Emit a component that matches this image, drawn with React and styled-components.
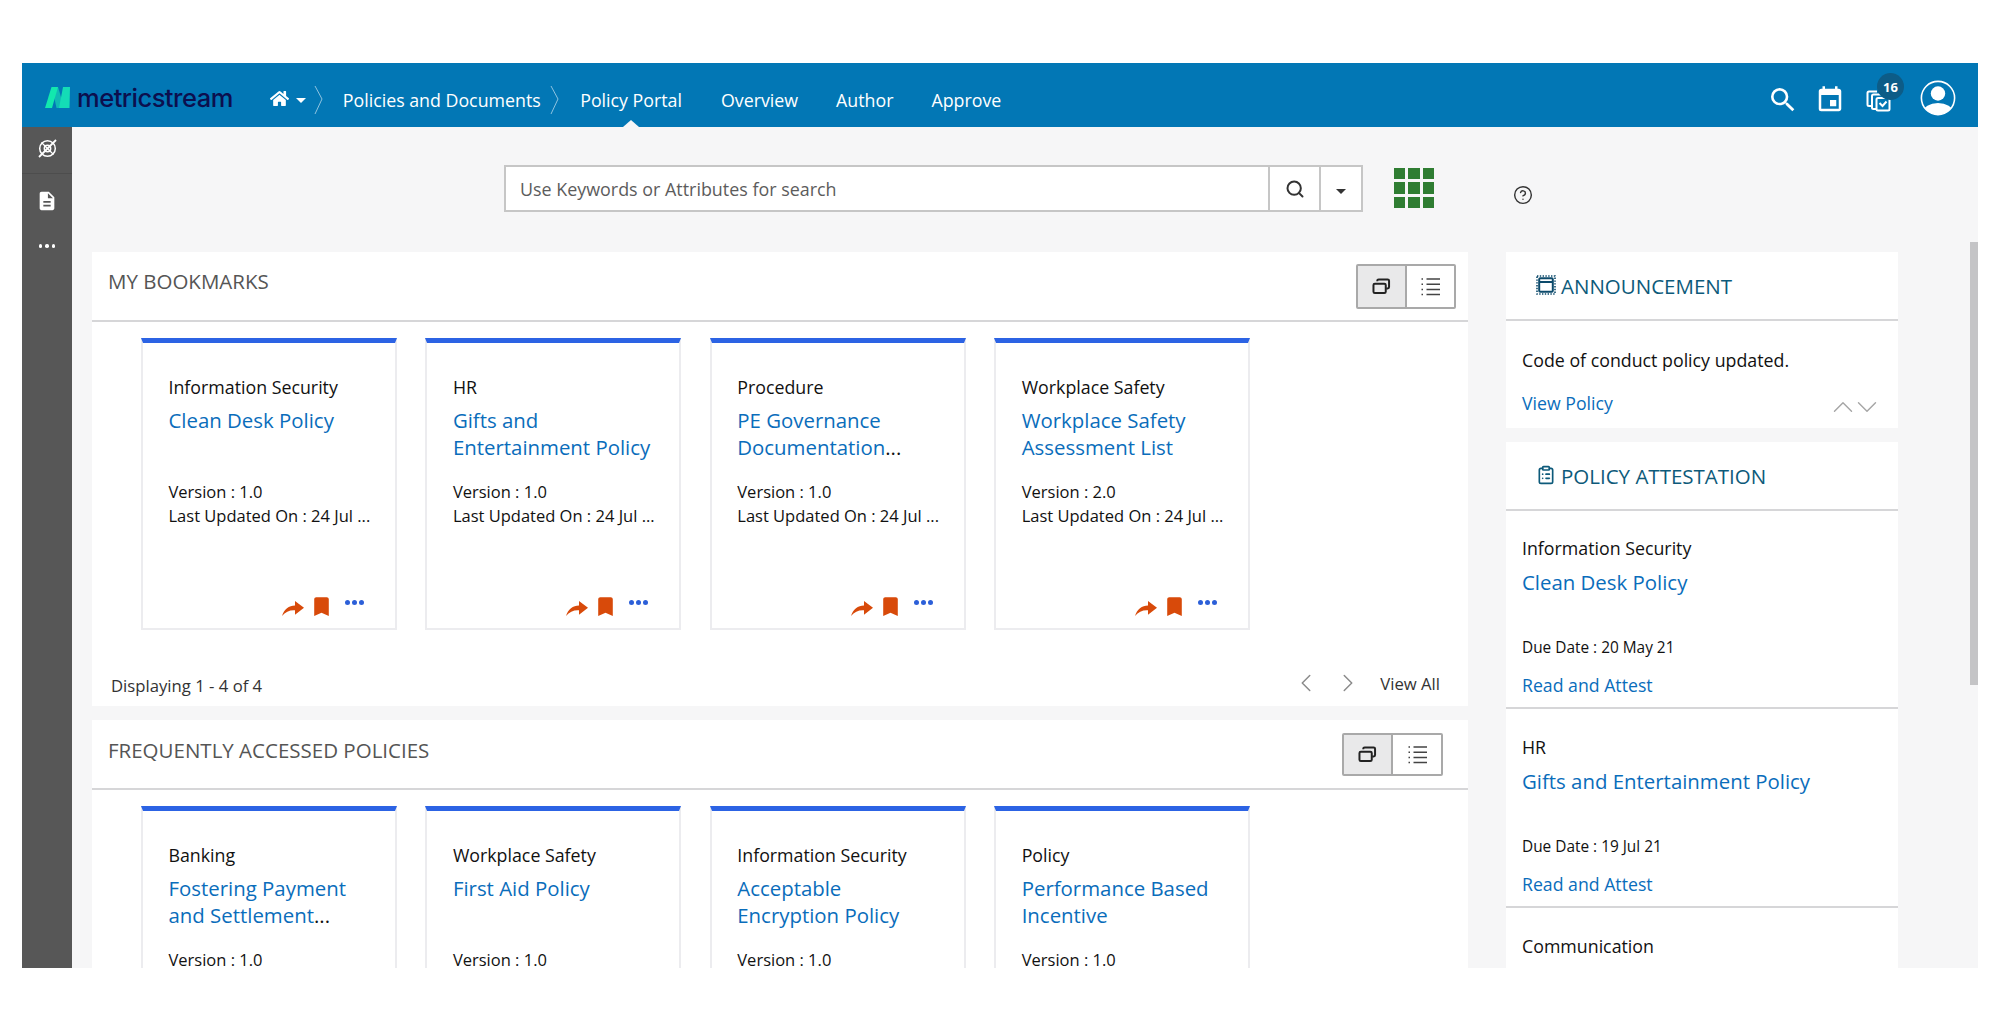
import React from "react";
import styled, { createGlobalStyle } from "styled-components";
import { FaHome } from "react-icons/fa";
import { MdSearch, MdEvent, MdDescription, MdBookmark } from "react-icons/md";
import { ChevronLeft, ChevronRight, ChevronUp, ChevronDown, ClipboardList, Search, CircleHelp } from "lucide-react";

const Global = createGlobalStyle`
  html, body { margin: 0; padding: 0; background: #fff; }
  body { font-family: "Open Sans", "Noto Sans", sans-serif; color: #111; }
  * { box-sizing: border-box; }
`;

const Frame = styled.div`
  margin: 63px 22px 0;
  height: 905px;
  overflow: hidden;
  display: flex;
  flex-direction: column;
  background: #f6f6f7;
`;
const Header = styled.header`
  height: 64px;
  flex: none;
  background: #0277b5;
  display: flex;
  align-items: stretch;
  padding: 10px 22px 0 23px;
  color: #fff;
`;
const Logo = styled.div`
  display: flex;
  align-items: center;
  gap: 7px;
  margin-right: 37px;
  margin-top: -5px;
`;
const LogoText = styled.span`
  font-family: "Inter", sans-serif;
  font-weight: 500;
  font-size: 25.5px;
  letter-spacing: -0.5px;
  color: #0c0f4e;
`;
const HomeGroup = styled.div`
  display: flex;
  align-items: center;
  gap: 7px;
  margin-top: -3px;
`;
const Caret = styled.span`
  width: 0;
  height: 0;
  border-left: 5px solid transparent;
  border-right: 5px solid transparent;
  border-top: 5px solid ${(p) => p.$color || "#fff"};
  margin-top: ${(p) => p.$top || 3}px;
`;
const Crumb = styled.svg`
  width: 9px;
  height: 28px;
  flex: none;
  align-self: center;
  margin: 0 ${(p) => p.$after}px 0 ${(p) => p.$before}px;
  fill: none;
  stroke: #8fc3e0;
  stroke-width: 1;
`;
const NavItem = styled.a`
  display: flex;
  align-items: center;
  position: relative;
  font-size: 17.8px;
  color: #fff;
  margin-right: ${(p) => p.$gap || 0}px;
  white-space: nowrap;
  ${(p) =>
    p.$active &&
    `&::after {
      content: "";
      position: absolute;
      left: 50%;
      bottom: 0;
      margin-left: -8px;
      border-left: 8px solid transparent;
      border-right: 8px solid transparent;
      border-bottom: 7px solid #f6f6f7;
    }`}
`;
const HeaderIcons = styled.div`
  margin-left: auto;
  display: flex;
  align-items: center;
  gap: 25px;
`;
const TaskWrap = styled.div`
  position: relative;
  width: 25px;
  height: 24px;
  margin-right: 4px;
`;
const Badge = styled.span`
  position: absolute;
  top: -15px;
  left: 11px;
  width: 27px;
  height: 27px;
  border-radius: 50%;
  background: #0d5c87;
  color: #fff;
  font-size: 13px;
  font-weight: 700;
  display: flex;
  align-items: center;
  justify-content: center;
`;
const AvatarSlot = styled.span`
  display: flex;
  margin-top: -5px;
`;

const Body = styled.div`
  flex: 1;
  min-height: 0;
  display: flex;
`;
const Sidebar = styled.nav`
  width: 50px;
  flex: none;
  background: #575757;
  color: #fff;
  display: flex;
  flex-direction: column;
  align-items: center;
`;
const SideSlot = styled.div`
  width: 100%;
  height: ${(p) => p.$h}px;
  display: flex;
  align-items: center;
  justify-content: center;
  padding-bottom: ${(p) => (p.$line ? 4 : 0)}px;
  border-bottom: ${(p) => (p.$line ? "1px solid #4d4d4d" : "none")};
`;
const Dots = styled.span`
  display: inline-flex;
  gap: ${(p) => p.$gap || 3}px;
  i {
    display: block;
    width: ${(p) => p.$size || 4}px;
    height: ${(p) => p.$size || 4}px;
    border-radius: 50%;
    background: ${(p) => p.$color || "#fff"};
  }
`;

const Main = styled.main`
  flex: 1;
  min-width: 0;
  display: flex;
`;
const Content = styled.div`
  flex: 1;
  min-width: 0;
  padding-left: 20px;
`;
const ScrollTrack = styled.div`
  width: 8px;
  flex: none;
`;
const ScrollThumb = styled.div`
  margin-top: 115px;
  height: 443px;
  background: #c4c4c6;
`;
const SearchRow = styled.div`
  height: 125px;
  padding: 38px 0 0 412px;
  display: flex;
  align-items: flex-start;
`;
const SearchBox = styled.div`
  width: 859px;
  height: 47px;
  display: flex;
  background: #fff;
  border: 2px solid #c6c6c6;
`;
const SearchInput = styled.input`
  flex: 1;
  min-width: 0;
  border: 0;
  outline: 0;
  background: transparent;
  padding: 0 14px;
  font: 400 17.9px "Open Sans", sans-serif;
  color: #555;
  &::placeholder { color: #5c5c5c; opacity: 1; }
`;
const SearchBtn = styled.div`
  width: ${(p) => p.$w}px;
  border-left: 2px solid #c6c6c6;
  display: flex;
  align-items: center;
  justify-content: center;
  color: #333;
`;
const AppGrid = styled.div`
  width: 40px;
  height: 40px;
  margin: 3px 0 0 31px;
  display: grid;
  grid-template-columns: repeat(3, 1fr);
  grid-template-rows: repeat(3, 1fr);
  gap: 3px;
  i { background: #2f7d32; display: block; }
`;
const Help = styled.div`
  margin: 20px 0 0 79px;
  color: #333;
  display: flex;
`;
const Columns = styled.div`
  display: grid;
  grid-template-columns: 1376px 392px;
  column-gap: 38px;
  align-items: start;
`;
const Stack = styled.div`
  display: flex;
  flex-direction: column;
  gap: 14px;
`;
const Panel = styled.section`
  background: #fff;
`;
const PanelHead = styled.div`
  height: 70px;
  border-bottom: 2px solid #d6d6d8;
  display: flex;
  align-items: flex-start;
  justify-content: space-between;
  padding: ${(p) => p.$top}px ${(p) => p.$right}px 0 16px;
`;
const PanelTitle = styled.h2`
  margin: 3px 0 0;
  font-size: 20.5px;
  line-height: 28px;
  font-weight: 400;
  color: #555;
`;
const Toggle = styled.div`
  display: flex;
  height: ${(p) => p.$h}px;
  border: 2px solid #a9a9a9;
  border-radius: 2px;
`;
const ToggleBtn = styled.div`
  width: ${(p) => p.$w}px;
  display: flex;
  align-items: center;
  justify-content: center;
  color: #444;
  background: ${(p) => (p.$on ? "#e9e9ea" : "#fff")};
  border-right: ${(p) => (p.$on ? "2px solid #a9a9a9" : "none")};
`;
const CardGrid = styled.div`
  display: grid;
  grid-template-columns: repeat(4, 256px);
  column-gap: 28.4px;
  padding: 16px 0 0 49px;
`;
const Card = styled.article`
  height: 292px;
  background: #fff;
  border: 2px solid #ececef;
  border-top: 5px solid #2c63e4;
  padding: 32px 0 12px 25.5px;
  display: flex;
  flex-direction: column;
`;
const Category = styled.div`
  font-size: 17.8px;
  line-height: 24px;
  color: #111;
  white-space: nowrap;
`;
const Title = styled.a`
  display: block;
  margin-top: 8px;
  min-height: 54px;
  font-size: 20.4px;
  line-height: 27px;
  color: #0a6dbb;
  white-space: pre-line;
`;
const More = styled.span`
  color: #111;
`;
const MetaBlock = styled.div`
  margin-top: 19px;
`;
const Meta = styled.div`
  font-size: 16.5px;
  line-height: 24px;
  color: #111;
  white-space: nowrap;
`;
const Actions = styled.div`
  margin-top: auto;
  height: 20px;
  padding-right: 31px;
  display: flex;
  align-items: center;
  justify-content: flex-end;
  color: #d84a0a;
`;
const ShareBtn = styled.span`
  display: flex;
  margin-right: 10px;
  margin-top: 4px;
`;
const MarkBtn = styled.span`
  display: flex;
  margin-right: 16px;
`;
const DotsBtn = styled.span`
  display: flex;
  margin-top: -8px;
`;
const Pager = styled.div`
  height: 76px;
  display: flex;
  align-items: flex-start;
  padding: 38px 28px 0 19px;
`;
const Count = styled.div`
  font-size: 16.7px;
  line-height: 24px;
  color: #333;
  margin-right: auto;
  margin-top: 6px;
`;
const PagerBtn = styled.span`
  display: flex;
  color: #8b8b8b;
  margin: 0 ${(p) => p.$after}px 0 0;
`;
const ViewAll = styled.a`
  font-size: 16.7px;
  line-height: 24px;
  color: #333;
  margin-top: 4px;
`;
const SideHead = styled.div`
  height: 69px;
  border-bottom: 2px solid #d6d6d8;
  display: flex;
  align-items: flex-start;
  gap: 5px;
  padding: 20px 0 0 30px;
`;
const SideTitle = styled.h2`
  margin: 0;
  font-size: 20.5px;
  line-height: 28px;
  font-weight: 400;
  color: #0d5a7a;
`;
const SideIcon = styled.span`
  display: flex;
  margin-top: 3px;
  color: #0d5a7a;
`;
const AnnounceBody = styled.div`
  padding: 25px 14px 0 16px;
  height: 107px;
`;
const AnnounceText = styled.div`
  font-size: 17.8px;
  line-height: 28px;
  color: #111;
`;
const AnnounceFoot = styled.div`
  margin-top: 17px;
  display: flex;
  align-items: flex-start;
  justify-content: space-between;
`;
const LinkText = styled.a`
  font-size: 17.7px;
  line-height: 24px;
  color: #0a6dbb;
`;
const Pair = styled.span`
  display: flex;
  color: #a6a6a6;
  margin-top: -1px;
  margin-left: auto;
  svg + svg { margin-left: -10px; }
`;
const AttestRow = styled.div`
  padding: ${(p) => p.$top}px 16px 10px;
  border-bottom: 2px solid #d6d6d8;
`;
const AttestTitle = styled.a`
  display: block;
  margin-top: 9px;
  font-size: 20.4px;
  line-height: 27px;
  color: #0a6dbb;
`;
const Due = styled.div`
  margin-top: 40px;
  font-size: 15.4px;
  line-height: 24px;
  color: #111;
`;
const ReadRow = styled.div`
  margin-top: 13px;
  display: flex;
`;
const Mark = styled.svg`
  display: block;
  flex: none;
`;

const CascadeIcon = () => (
  <Mark width="19" height="17" viewBox="0 0 20 18" fill="none" stroke="#222" strokeWidth="2.1">
    <rect x="1.5" y="6" width="13" height="10" rx="1.5" />
    <path d="M5.5 3.5V3A1.5 1.5 0 0 1 7 1.5h9.5A1.5 1.5 0 0 1 18 3v6.5a1.5 1.5 0 0 1-1.5 1.5H15" />
  </Mark>
);
const ListIcon = () => (
  <Mark width="19" height="19" viewBox="0 0 19 19" fill="none" stroke="#444" strokeWidth="1.5">
    <path d="M5.5 2H19M5.5 7.2H19M5.5 12.4H19M5.5 17.6H19" />
    <path d="M0.5 2H3M0.5 7.2H3M0.5 12.4H3M0.5 17.6H3" strokeDasharray="1.5 1" />
  </Mark>
);
const TargetIcon = () => (
  <Mark width="21" height="21" viewBox="0 0 21 21" fill="none" stroke="#fff" strokeWidth="1.5">
    <circle cx="10.5" cy="10.5" r="7.8" />
    <circle cx="10.5" cy="10.5" r="3.2" />
    <path d="M2 19 19 2" strokeWidth="1.8" />
    <path d="M4.5 4.5l12 12" strokeWidth="1.2" />
  </Mark>
);
const TaskIcon = () => (
  <Mark width="25" height="24" viewBox="0 0 25 24" fill="none" stroke="#fff" strokeWidth="2">
    <path d="M6 18H3a1.5 1.5 0 0 1-1.5-1.5V5A1.5 1.5 0 0 1 3 3.5h8" />
    <path d="M10 21H7.5A1.5 1.5 0 0 1 6 19.5V8a1.5 1.5 0 0 1 1.5-1.5H15" />
    <rect x="10.5" y="10" width="13" height="12.5" rx="1.5" />
    <path d="m13.5 15 3 3 4-4.5" />
  </Mark>
);
const AvatarIcon = () => (
  <Mark width="36" height="36" viewBox="0 0 36 36">
    <defs>
      <clipPath id="avatar-clip"><circle cx="18" cy="18" r="16.6" /></clipPath>
    </defs>
    <circle cx="18" cy="18" r="16.6" fill="none" stroke="#fff" strokeWidth="1.6" />
    <g clipPath="url(#avatar-clip)" fill="#fff">
      <circle cx="18" cy="13.5" r="7.2" />
      <ellipse cx="18" cy="32" rx="15" ry="9" />
    </g>
  </Mark>
);
const ChipIcon = () => (
  <Mark width="20" height="20" viewBox="0 0 20 20" fill="none" stroke="#0c4a6b">
    <rect x="1" y="1" width="18" height="18" strokeWidth="1.6" strokeDasharray="1.4 1.4" />
    <rect x="3.2" y="3.2" width="13.6" height="13.6" rx="1" strokeWidth="2" />
    <path d="M3 7h14" strokeWidth="2" />
  </Mark>
);
const ShareIcon = () => (
  <Mark width="22" height="15" viewBox="0 0 22 15" fill="currentColor">
    <path d="M0 15C2 8 7 4.6 13 4.4V0l9 6.8-9 7V9.2C8 8.8 3.5 10.5 0 15z" />
  </Mark>
);
const LogoMark = () => (
  <Mark width="25" height="21" viewBox="0 0 25 21">
    <path d="M7 0h6L17.5 15 14.5 21h-3z" fill="#10b9b4" />
    <path d="M0 21 6.5 0H13L7 21z" fill="#12e8ae" />
    <path d="M18 0h7L24.5 21H14z" fill="#14dcb6" />
  </Mark>
);
const Chevron = ({ before, after }) => (
  <Crumb $before={before} $after={after} viewBox="0 0 9 28">
    <path d="M1 0 8 13 1 28" />
  </Crumb>
);
const ThreeDots = (props) => (
  <Dots {...props}>
    <i />
    <i />
    <i />
  </Dots>
);

const bookmarks = [
  { cat: "Information Security", title: "Clean Desk Policy", version: "1.0" },
  { cat: "HR", title: "Gifts and\nEntertainment Policy", version: "1.0" },
  { cat: "Procedure", title: "PE Governance\nDocumentation", more: true, version: "1.0" },
  { cat: "Workplace Safety", title: "Workplace Safety\nAssessment List", version: "2.0" },
];
const frequent = [
  { cat: "Banking", title: "Fostering Payment\nand Settlement", more: true, version: "1.0" },
  { cat: "Workplace Safety", title: "First Aid Policy", version: "1.0" },
  { cat: "Information Security", title: "Acceptable\nEncryption Policy", version: "1.0" },
  { cat: "Policy", title: "Performance Based\nIncentive", version: "1.0" },
];
const attest = [
  { cat: "Information Security", title: "Clean Desk Policy", due: "20 May 21", top: 25 },
  { cat: "HR", title: "Gifts and Entertainment Policy", due: "19 Jul 21", top: 26 },
  { cat: "Communication", top: 26 },
];

const PolicyCard = ({ item, cropped }) => (
  <Card>
    <Category>{item.cat}</Category>
    <Title>
      {item.title}
      {item.more && <More>...</More>}
    </Title>
    <MetaBlock>
      <Meta>Version : {item.version}</Meta>
      {!cropped && <Meta>Last Updated On : 24 Jul ...</Meta>}
    </MetaBlock>
    {!cropped && (
      <Actions>
        <ShareBtn><ShareIcon /></ShareBtn>
        <MarkBtn><MdBookmark size={25} style={{ margin: "0 -5px" }} /></MarkBtn>
        <DotsBtn><ThreeDots $color="#2c5fd8" $size={5} $gap={2} /></DotsBtn>
      </Actions>
    )}
  </Card>
);

const ViewToggle = ({ h, on, off }) => (
  <Toggle $h={h}>
    <ToggleBtn $on $w={on}><CascadeIcon /></ToggleBtn>
    <ToggleBtn $w={off}><ListIcon /></ToggleBtn>
  </Toggle>
);

export default function App() {
  return (
    <>
      <Global />
      <Frame>
        <Header>
          <Logo>
            <LogoMark />
            <LogoText>metricstream</LogoText>
          </Logo>
          <HomeGroup>
            <FaHome size={19} />
            <Caret />
          </HomeGroup>
          <Chevron before={8} after={20} />
          <NavItem>Policies and Documents</NavItem>
          <Chevron before={9} after={21.5} />
          <NavItem $active $gap={39}>Policy Portal</NavItem>
          <NavItem $gap={38}>Overview</NavItem>
          <NavItem $gap={38}>Author</NavItem>
          <NavItem>Approve</NavItem>
          <HeaderIcons>
            <MdSearch size={32} style={{ margin: "0 -5px" }} />
            <MdEvent size={30} style={{ margin: "0 -4px" }} />
            <TaskWrap>
              <TaskIcon />
              <Badge>16</Badge>
            </TaskWrap>
            <AvatarSlot><AvatarIcon /></AvatarSlot>
          </HeaderIcons>
        </Header>
        <Body>
          <Sidebar>
            <SideSlot $h={47} $line><TargetIcon /></SideSlot>
            <SideSlot $h={54}><MdDescription size={22} /></SideSlot>
            <SideSlot $h={36}><ThreeDots $size={3.5} $gap={3} /></SideSlot>
          </Sidebar>
          <Main>
            <Content>
              <SearchRow>
                <SearchBox>
                  <SearchInput placeholder="Use Keywords or Attributes for search" />
                  <SearchBtn $w={51}><Search size={20} strokeWidth={2.4} /></SearchBtn>
                  <SearchBtn $w={42}><Caret $color="#333" $top={6} /></SearchBtn>
                </SearchBox>
                <AppGrid>
                  {Array.from({ length: 9 }, (_, i) => <i key={i} />)}
                </AppGrid>
                <Help><CircleHelp size={20} strokeWidth={1.7} /></Help>
              </SearchRow>
              <Columns>
                <Stack>
                  <Panel>
                    <PanelHead $top={12} $right={12}>
                      <PanelTitle>MY BOOKMARKS</PanelTitle>
                      <ViewToggle h={45} on={49} off={47} />
                    </PanelHead>
                    <CardGrid>
                      {bookmarks.map((b) => <PolicyCard key={b.title} item={b} />)}
                    </CardGrid>
                    <Pager>
                      <Count>Displaying 1 - 4 of 4</Count>
                      <PagerBtn $after={12}><ChevronLeft size={30} strokeWidth={1.2} /></PagerBtn>
                      <PagerBtn $after={17}><ChevronRight size={30} strokeWidth={1.2} /></PagerBtn>
                      <ViewAll>View All</ViewAll>
                    </Pager>
                  </Panel>
                  <Panel>
                    <PanelHead $top={13} $right={25}>
                      <PanelTitle>FREQUENTLY ACCESSED POLICIES</PanelTitle>
                      <ViewToggle h={43} on={49} off={48} />
                    </PanelHead>
                    <CardGrid>
                      {frequent.map((b) => <PolicyCard key={b.title} item={b} cropped />)}
                    </CardGrid>
                  </Panel>
                </Stack>
                <Stack>
                  <Panel>
                    <SideHead>
                      <SideIcon><ChipIcon /></SideIcon>
                      <SideTitle>ANNOUNCEMENT</SideTitle>
                    </SideHead>
                    <AnnounceBody>
                      <AnnounceText>Code of conduct policy updated.</AnnounceText>
                      <AnnounceFoot>
                        <LinkText>View Policy</LinkText>
                        <Pair>
                          <ChevronUp size={34} strokeWidth={1} />
                          <ChevronDown size={34} strokeWidth={1} />
                        </Pair>
                      </AnnounceFoot>
                    </AnnounceBody>
                  </Panel>
                  <Panel>
                    <SideHead>
                      <SideIcon><ClipboardList size={20} strokeWidth={2} /></SideIcon>
                      <SideTitle>POLICY ATTESTATION</SideTitle>
                    </SideHead>
                    {attest.map((r) => (
                      <AttestRow key={r.cat} $top={r.top}>
                        <Category>{r.cat}</Category>
                        {r.title && (
                          <>
                            <AttestTitle>{r.title}</AttestTitle>
                            <Due>Due Date : {r.due}</Due>
                            <ReadRow><LinkText>Read and Attest</LinkText></ReadRow>
                          </>
                        )}
                      </AttestRow>
                    ))}
                  </Panel>
                </Stack>
              </Columns>
            </Content>
            <ScrollTrack><ScrollThumb /></ScrollTrack>
          </Main>
        </Body>
      </Frame>
    </>
  );
}
